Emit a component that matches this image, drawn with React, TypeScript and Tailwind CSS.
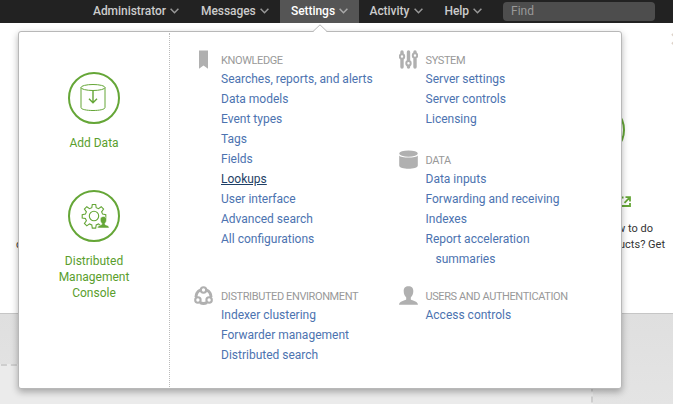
import React from "react";

function Chevron({ active = false }: { active?: boolean }) {
  return (
    <svg width="9" height="6" viewBox="0 0 9 6" fill="none" className="shrink-0">
      <path d="M0.6 0.8 4.5 4.8 8.4 0.8" stroke={active ? "#aaa" : "#999"} strokeWidth="1.5" />
    </svg>
  );
}

function NavItem({ label, className }: { label: string; className: string }) {
  return (
    <div className={`flex h-[23px] shrink-0 items-center justify-between pb-px text-[12px] font-medium leading-4 tracking-[-0.05px] ${className}`}>
      <span className="whitespace-nowrap">{label}</span>
      <Chevron active={label === "Settings"} />
    </div>
  );
}

function BookmarkIcon() {
  return (
    <svg width="19" height="19" viewBox="0 0 19 19" fill="#b0b0b0">
      <path d="M5 0.5h9v18.3l-4.5-3.3L5 18.8z" />
    </svg>
  );
}

function SlidersIcon() {
  return (
    <svg width="19" height="19" viewBox="0 0 19 19" fill="none" stroke="#b0b0b0">
      <g strokeWidth="3.4" strokeLinecap="round">
        <path d="M3 2v2M3 9v8M9.5 2v8M9.500 16v1M16 2v2M16 9v8" />
      </g>
      <g strokeWidth="2" fill="#fff">
        <circle cx="3" cy="6.500" r="2.200" />
        <circle cx="9.500" cy="13.300" r="2.200" />
        <circle cx="16" cy="5.500" r="2.200" />
      </g>
    </svg>
  );
}

function DatabaseIcon() {
  return (
    <svg width="19" height="19" viewBox="0 0 19 19" fill="#b0b0b0">
      <ellipse cx="9.5" cy="3.6" rx="9.3" ry="3.2" />
      <path d="M0.2 5.4c1.5 2.7 17.1 2.7 18.6 0v10.2c0 4.3-18.6 4.3-18.6 0z" />
    </svg>
  );
}

function UserIcon() {
  return (
    <svg width="19" height="19" viewBox="0 0 19 19" fill="#b0b0b0">
      <path d="M9.5 0.200c3.200 0 5 1.800 4.800 5.100 0 2.800-1.200 4.900-2.500 6.200v2c1.600 1.100 6.900 1.500 7.200 5.300H0c.3-3.800 5.600-4.200 7.200-5.300v-2C5.900 10.200 4.700 8.100 4.700 5.300 4.500 2 6.300.2 9.500.2z" />
    </svg>
  );
}

function ClusterIcon() {
  return (
    <svg width="19" height="19" viewBox="0 0 19 19" fill="none" stroke="#b0b0b0">
      <path d="M6.300 4C3.500 5.500 2 8 2 11M12.700 4C15.500 5.500 17 8 17 11M6 16.700c2.300 1 4.700 1 7 0" strokeWidth="3" />
      <g strokeWidth="2.100" fill="#fff">
        <circle cx="9.500" cy="4" r="2.700" />
        <circle cx="3.900" cy="14" r="2.700" />
        <circle cx="15.100" cy="14" r="2.700" />
      </g>
    </svg>
  );
}

function AddDataIcon() {
  return (
    <svg width="52" height="52" viewBox="0 0 52 52" fill="none" stroke="#65a637">
      <circle cx="26" cy="26" r="25" strokeWidth="2" />
      <g strokeWidth="1">
        <ellipse cx="25" cy="15.500" rx="12" ry="3" />
        <path d="M13 15.500v20c0 4 24 4 24 0v-20" />
      </g>
      <path d="M25 18.500v12M21 26.800l4 4 4-4" strokeWidth="1.400" />
    </svg>
  );
}

function ConsoleIcon() {
  return (
    <svg width="52" height="52" viewBox="0 0 52 52" fill="none" stroke="#65a637">
      <circle cx="26" cy="26" r="25" strokeWidth="2" />
      <path
        d="M23.800 17.700 24.300 14.500h3.400l.5 3.200 2.300 1 2.700-2 2.400 2.400-2 2.700 1 2.300 3.200.5v3.400l-3.200.5-1 2.300 2 2.700-2.400 2.400-2.700-2-2.300 1-.5 3.200h-3.400l-.5-3.200-2.300-1-2.700 2-2.400-2.400 2-2.700-1-2.300-3.200-.5v-3.400l3.200-.5 1-2.300-2-2.700 2.400-2.400 2.700 2z"
        strokeWidth="1.100"
      />
      <circle cx="26" cy="26" r="4.700" strokeWidth="1.100" />
      <path
        d="M35.400 26.500c2 0 3.200 1.100 3.100 3.200 0 1.700-.7 2.900-1.500 3.600v1.200c1 .7 4 .7 4.200 3.500H29.500c.2-2.800 3.200-2.800 4.300-3.500v-1.200c-.8-.7-1.500-1.900-1.500-3.600-.1-2.100 1.100-3.200 3.100-3.200z"
        fill="#65a637"
        stroke="#fff"
        strokeWidth=".5"
      />
    </svg>
  );
}

interface SectionProps {
  icon: React.ReactNode;
  title: string;
  items: string[];
  className?: string;
}

function Section({ icon, title, items, className = "" }: SectionProps) {
  return (
    <section className={`flex gap-2 ${className}`}>
      <div className="-mt-px h-[19px] w-[19px] shrink-0">{icon}</div>
      <div>
        <h3 className="h-[18px] whitespace-nowrap text-[11px] leading-[19px] tracking-[-0.036em] text-[#999]">{title}</h3>
        <ul>
          {items.map((item) => (
            <li
              key={item}
              className={
                item === "Lookups"
                  ? "h-5 text-[12px] leading-5 text-[#1e3f66] underline"
                  : "w-[150px] pl-[10px] -indent-[10px] text-[12px] leading-5 text-[#4c73b0]"
              }
            >
              {item}
            </li>
          ))}
        </ul>
      </div>
    </section>
  );
}

export default function App() {
  return (
    <div className="relative flex h-[404px] w-[673px] flex-col overflow-hidden bg-white font-['Roboto',sans-serif]">
      <nav className="flex h-[23px] shrink-0 items-center bg-[#222] text-[#ccc]">
        <NavItem label="Administrator" className="ml-[93px] w-[86px]" />
        <NavItem label="Messages" className="ml-[22px] w-[68px]" />
        <NavItem label="Settings" className="ml-[11px] w-[79px] bg-[#555] pl-[11px] pr-[11px] text-white" />
        <NavItem label="Activity" className="ml-[10.5px] w-[53px]" />
        <NavItem label="Help" className="ml-[22px] w-[37px]" />
        <div className="ml-[21.5px] h-[19px] w-[152px] rounded-[4px] bg-[#4d4d4d] pl-2 text-[12px] leading-[19px] text-[#999]">
          Find
        </div>
      </nav>

      <main className="flex h-[290px] shrink-0 flex-col overflow-hidden">
        <div className="h-[81px] pl-[671px] pt-[10px]">
          <svg width="12" height="12" viewBox="0 0 12 12" fill="none" stroke="#ddd2c8" strokeWidth="2">
            <path d="M1 1 11 11M11 1 1 11" />
          </svg>
        </div>
        <div className="ml-[573px] h-[52px] w-[52px] rounded-full border-2 border-[#65a637]" />
        <svg width="11" height="11" viewBox="0 0 11 11" fill="none" stroke="#65a637" strokeWidth="1.800" className="ml-[620px] mt-[40px]">
          <path d="M3.500 1.500H1V10h9V7M5.500 1.200H10v4.300M9.800 1.400 4.500 6.800" />
        </svg>
        <div className="mt-[14px] flex justify-between pl-4 text-[11px] leading-4 text-[#333]">
          <div className="pt-4">c</div>
          <div>
            <div className="pr-5 text-right">how to do</div>
            <div className="pr-2 text-right">products? Get</div>
          </div>
        </div>
      </main>

      <footer className="flex h-[91px] shrink-0 border-t border-[#c6c6c6] bg-linear-to-b from-[#dfdfdf] to-[#e4e4e4] pt-[50px]">
        <div className="-ml-[9px] h-[60px] w-[602px] border-2 border-dashed border-[#cecece] bg-[#ebebeb]" />
      </footer>

      <div className="absolute left-[18px] top-[31px] flex h-[358px] w-[604px] rounded-[3px] border border-[#b8b8b8] bg-white shadow-[0_3px_7px_rgba(0,0,0,0.3)]">
        <svg width="16" height="9" viewBox="0 0 16 9" className="absolute -top-[8px] left-[293px]">
          <path d="M0 9 1 8 8 .8 15 8 16 9z" fill="#fff" />
          <path d="M0 7.500h1L8 .8l7 6.700h1" fill="none" stroke="#b8b8b8" />
        </svg>

        <div className="my-px flex w-[151px] flex-col items-center border-r border-dotted border-[#bbb] pt-[39px] text-center text-[12px] leading-4 text-[#5a9e2d]">
          <AddDataIcon />
          <div className="mt-[11px]">Add Data</div>
          <div className="mt-[39px]">
            <ConsoleIcon />
          </div>
          <div className="mt-[11px] w-[90px]">Distributed Management Console</div>
        </div>

        <div className="flex pl-6 pt-[19px]">
          <div className="w-[204.5px] shrink-0">
            <Section
              icon={<BookmarkIcon />}
              title="KNOWLEDGE"
              className="h-[236px] [&_li]:w-[170px]"
              items={["Searches, reports, and alerts", "Data models", "Event types", "Tags", "Fields", "Lookups", "User interface", "Advanced search", "All configurations"]}
            />
            <Section
              icon={<ClusterIcon />}
              title="DISTRIBUTED ENVIRONMENT"
              items={["Indexer clustering", "Forwarder management", "Distributed search"]}
            />
          </div>
          <div>
            <Section icon={<SlidersIcon />} title="SYSTEM" className="h-[100px]" items={["Server settings", "Server controls", "Licensing"]} />
            <Section
              icon={<DatabaseIcon />}
              title="DATA"
              className="h-[136px]"
              items={["Data inputs", "Forwarding and receiving", "Indexes", "Report acceleration summaries"]}
            />
            <Section icon={<UserIcon />} title="USERS AND AUTHENTICATION" items={["Access controls"]} />
          </div>
        </div>
      </div>
    </div>
  );
}
